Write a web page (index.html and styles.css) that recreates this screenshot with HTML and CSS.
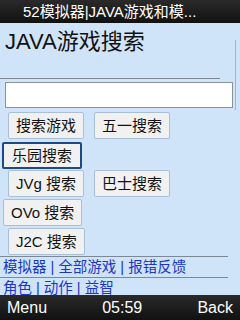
FILE: index.html
```html
<!DOCTYPE html>
<html>
<head>
<meta charset="utf-8">
<link rel="stylesheet" href="styles.css">
</head>
<body>
<div class="phone">
  <div class="topbar">52模拟器|JAVA游戏和模...</div>
  <div class="content">
    <h1 class="title">JAVA游戏搜索</h1>
    <div class="rule rule-top"></div>
    <div class="scroll"></div>
    <div class="input"></div>
    <div class="row r1"><span class="btn">搜索游戏</span><span class="btn b2">五一搜索</span></div>
    <div class="row r2"><span class="btn focus">乐园搜索</span></div>
    <div class="row r3"><span class="btn">JVg 搜索</span><span class="btn b2">巴士搜索</span></div>
    <div class="row r4"><span class="btn">OVo 搜索</span></div>
    <div class="row r5"><span class="btn">J2C 搜索</span></div>
    <div class="rule rule-mid"></div>
    <div class="links">模拟器 | 全部游戏 | 报错反馈</div>
    <div class="rule rule-low"></div>
    <div class="links">角色 | 动作 | 益智</div>
  </div>
  <div class="bottombar"><span>Menu</span><span>05:59</span><span>Back</span></div>
</div>
</body>
</html>
```
FILE: styles.css
```css
* { box-sizing: border-box; }
html, body { margin: 0; padding: 0; }
body { width: 240px; height: 320px; overflow: hidden; font-family: "Liberation Sans", "Noto Sans CJK SC", sans-serif; }
.phone { width: 240px; height: 320px; display: flex; flex-direction: column; background: #d0e4f9; position: relative; }
.topbar { height: 23px; flex: none; background: linear-gradient(#2a2a2a, #111); color: #fff; font-size: 15px; line-height: 23px; padding-left: 23px; white-space: nowrap; overflow: hidden; }
.content { flex: 1; overflow: hidden; position: relative; }
.title { margin: 0; font-weight: normal; font-size: 22px; line-height: 26px; color: #111; padding: 6px 0 0 5px; height: 55px; }
.rule { height: 1px; background: #7d8896; }
.rule-top { width: 220px; }
.scroll { position: absolute; right: 4px; top: 17px; width: 1px; height: 70px; background: #aab4c0; }
.input { margin: 3px 7px 0 5px; height: 26px; background: #fff; border: 1px solid #8a939d; }
.row { display: flex; height: 29px; align-items: flex-start; }
.r1 { margin-top: 4px; padding-left: 8px; height: 30px; }
.r2 { padding-left: 2px; height: 28px; }
.r3 { padding-left: 8px; }
.r4 { padding-left: 3px; }
.r5 { padding-left: 8px; height: 28px; }
.btn { display: inline-block; height: 27px; padding: 0 7px; line-height: 25px; font-size: 15px; color: #111; background: #f1f1f1; border: 1px solid #a9bfd6; border-radius: 2px; white-space: nowrap; }
.btn.b2 { margin-left: 10px; }
.btn.focus { border: 2px solid #1c4a86; padding: 0 8px; line-height: 23px; }
.rule-mid { width: 228px; margin-top: 0; }
.links { font-size: 14.5px; line-height: 20px; color: #1a36c9; padding-left: 3px; white-space: nowrap; }
.rule-low { width: 228px; }
.bottombar { height: 25px; flex: none; background: linear-gradient(#2a2a2a, #111); color: #fff; font-size: 16px; line-height: 25px; display: flex; justify-content: space-between; padding: 0 7px 0 7px; }
```
